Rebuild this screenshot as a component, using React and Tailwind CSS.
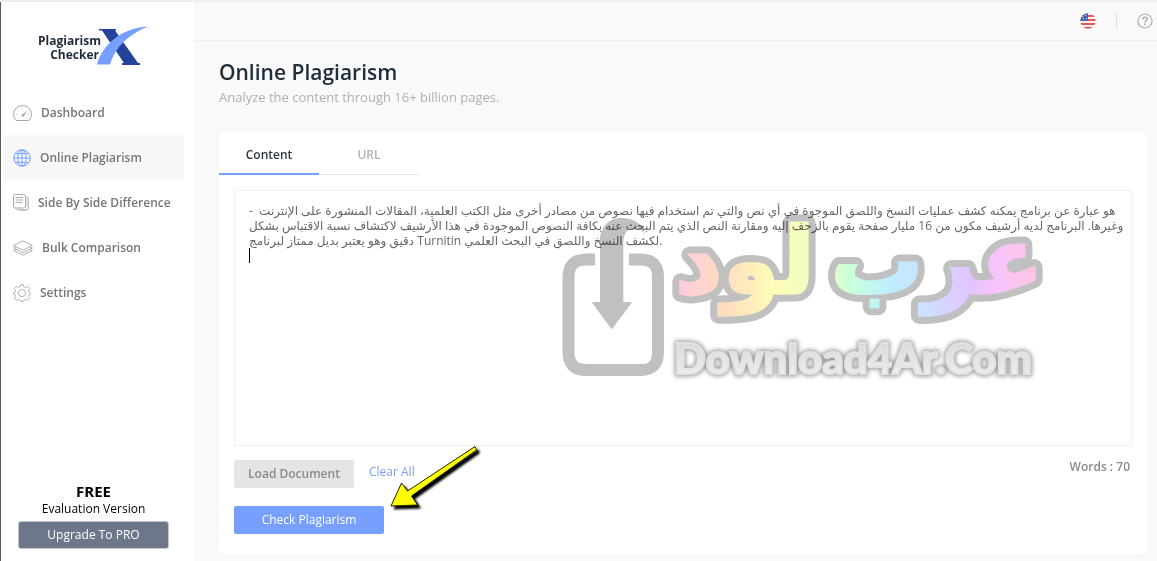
const NAV_ITEMS = [
  { label: "Dashboard", icon: GaugeIcon },
  { label: "Online Plagiarism", icon: GlobeIcon, active: true },
  { label: "Side By Side Difference", icon: PagesIcon },
  { label: "Bulk Comparison", icon: LayersIcon },
  { label: "Settings", icon: GearIcon },
]

const CONTENT = `-  هو عبارة عن برنامج يمكنه كشف عمليات النسخ واللصق الموجوة في أي نص والتي تم استخدام فيها نصوص من مصادر أخرى مثل الكتب العلمية، المقالات المنشورة على الإنترنت
وغيرها. البرنامج لديه أرشيف مكون من 16 مليار صفحة يقوم بالزحف إليه ومقارنة النص الذي يتم البحث عنه بكافة النصوص الموجودة في هذا الأرشيف لاكتشاف نسبة الاقتباس بشكل
دقيق وهو يعتبر بديل ممتاز لبرنامج Turnitin لكشف النسخ واللصق في البحث العلمي.
`

function GaugeIcon() {
  return (
    <svg width="19" height="18" viewBox="0 0 19 18" fill="none" stroke="#a9a9a9">
      <path d="M3.2 16.500C1.400 15 .5 12.800.5 10.500a9 9 0 0 1 18 0c0 2.300-.9 4.500-2.700 6z" />
      <path d="M9.500 3.500v1.200M4.500 5.500l.8.8M14.500 5.500l-.8.8M2.800 10.500H4M15 10.500h1.200" strokeWidth=".8" />
      <path d="M13.800 7l-4.600 3.500c-.8.600-.8 1.600-.2 2 .6.500 1.500.3 2-.5z" fill="#a9a9a9" stroke="none" />
    </svg>
  )
}

function GlobeIcon() {
  return (
    <svg width="18" height="18" viewBox="0 0 18 18" fill="none" stroke="#769fff">
      <circle cx="9" cy="9" r="8.200" />
      <ellipse cx="9" cy="9" rx="4.200" ry="8.200" />
      <path d="M9 .8v16.400M.8 9h16.400M2.300 4.600h13.400M2.300 13.400h13.400" />
    </svg>
  )
}

function PagesIcon() {
  return (
    <svg width="16" height="17" viewBox="0 0 16 17" fill="none" stroke="#aaaaaa">
      <rect x=".5" y=".5" width="12" height="13.500" rx="2" />
      <path d="M12.500 2c1.200 0 1.700.7 1.700 1.700v9.800c0 1.300-.8 2-2 2H4c-1 0-1.700-.5-1.700-1.500" strokeWidth=".7" />
      <path d="M14.200 3.500c.9.200 1.300.8 1.300 1.700v8.800c0 1.600-1 2.500-2.500 2.500H6" strokeWidth=".7" />
      <path d="M2.500 3.500H10M2.500 6H10M2.500 8.500H9" />
    </svg>
  )
}

function LayersIcon() {
  return (
    <svg width="20" height="16" viewBox="0 0 20 16" fill="none" stroke="#a6a6a6" strokeWidth=".9" strokeLinejoin="round">
      <path d="M10 .8l9.300 4.700L10 10.200.7 5.500z" />
      <path d="M3 6.800L.7 8l9.300 4.700L19.300 8 17 6.800" />
      <path d="M3 9.300l-2.300 1.200 9.300 4.700 9.300-4.700L17 9.300" />
    </svg>
  )
}

function GearIcon() {
  return (
    <svg width="18" height="18" viewBox="0 0 18 18" fill="none" stroke="#b3b3b3" strokeLinejoin="round">
      <path d="M7.600.7h2.800l.5 2.200 1.600.7 2-1.300 2.200 2.200-1.300 2 .7 1.600 1.200.2v2l-1.200.5-.7 1.600 1.300 2-2.200 2.200-2-1.300-1.600.7-.5 1.300H7.600l-.5-1.300-1.600-.7-2 1.300-2.200-2.200 1.300-2-.7-1.600-1.200-.5v-2l1.200-.2.7-1.600-1.300-2 2.200-2.200 2 1.300 1.600-.7z" />
      <circle cx="9" cy="9" r="3.600" />
    </svg>
  )
}

function FlagIcon() {
  return (
    <svg width="16" height="16" viewBox="0 0 16 16">
      <clipPath id="flag-clip">
        <circle cx="8" cy="8" r="7.700" />
      </clipPath>
      <g clipPath="url(#flag-clip)">
        <path d="M0 0h16v16H0z" fill="#f7f1f0" />
        <path d="M0 2h16v2H0zM0 6h16v2H0zM0 10h16v2H0zM0 14h16v2H0z" fill="#e8535d" />
        <path d="M0 0h8v8H0z" fill="#4664b4" />
        <path d="M2 3h1v1H2zM5 2h1v1H5zM3 5h1v1H3zM6 5h1v1H6z" fill="#dfe6f6" />
      </g>
    </svg>
  )
}

function HelpIcon() {
  return (
    <svg width="16" height="16" viewBox="0 0 16 16" fill="none" stroke="#b0b0b0" strokeWidth="1.200">
      <circle cx="8" cy="8" r="7" />
      <path d="M5.900 6.300C5.900 5 6.800 4.300 8 4.300s2.200.7 2.200 1.900C10.200 7.600 8 7.800 8 9.400" strokeWidth="1.600" />
      <path d="M8 10.600v1.600" strokeWidth="1.600" />
    </svg>
  )
}

function Logo() {
  return (
    <div className="flex h-[88px] items-start justify-center pt-6 pr-2">
      <div className="pt-2 text-right text-[12px] leading-[14px] font-bold text-[#1d2b3a]">
        <div>Plagiarism</div>
        <div className="pr-[2px]">Checker</div>
      </div>
      <svg width="52" height="40" viewBox="0 0 52 40" className="-ml-1">
        <path d="M2 3h17v1.500h-1L41 37h2v2H25v-2h2L5 4.500H2z" fill="#25429b" />
        <path d="M0 38.500C5 20 23 2 51 .5 32 8 18 21 13 38.500z" fill="#769fff" />
      </svg>
    </div>
  )
}

function Sidebar() {
  return (
    <aside className="flex w-[194px] shrink-0 flex-col border-l border-[#5c5c5c] bg-white">
      <Logo />
      <nav className="flex flex-col pr-[10px] pl-[2px]">
        {NAV_ITEMS.map(({ label, icon: Icon, active }) => (
          <a
            key={label}
            href="#"
            className={`flex h-[45px] items-center gap-[9px] pl-[10px] text-[12px] font-semibold text-[#767676] ${active ? "bg-[#f8f8f8]" : ""}`}
          >
            <Icon />
            {label}
          </a>
        ))}
      </nav>
      <div className="mt-auto flex flex-col pr-[25px] pb-3 pl-[17px] text-center text-black">
        <div className="text-[15px] leading-[18px] font-bold">FREE</div>
        <div className="text-[12px] leading-[18px]">Evaluation Version</div>
        <button className="mt-[3px] h-7 rounded-[3px] border border-[#c3c7cf] bg-[#6e778a] text-[12px] text-white">
          Upgrade To PRO
        </button>
      </div>
    </aside>
  )
}

function Watermark() {
  return (
    <svg
      width="490"
      height="196"
      viewBox="560 190 490 196"
      className="pointer-events-none absolute top-0 left-[326px] mix-blend-multiply"
    >
      <defs>
        <linearGradient id="rainbow" gradientUnits="userSpaceOnUse" x1="670" y1="0" x2="1035" y2="0">
          <stop offset="0" stopColor="#ffc8e0" />
          <stop offset=".15" stopColor="#ffdcc0" />
          <stop offset=".28" stopColor="#fffbb8" />
          <stop offset=".42" stopColor="#eaffc4" />
          <stop offset=".5" stopColor="#c8ffdc" />
          <stop offset=".6" stopColor="#bdeeff" />
          <stop offset=".7" stopColor="#cde0ff" />
          <stop offset=".82" stopColor="#e2c4ff" />
          <stop offset=".9" stopColor="#f8c4fa" />
          <stop offset="1" stopColor="#ffc4e4" />
        </linearGradient>
        <linearGradient id="silver" x1="0" y1="0" x2="0" y2="1">
          <stop offset="0" stopColor="#d2d2d2" />
          <stop offset="1" stopColor="#f4f4f4" />
        </linearGradient>
        <filter id="glow" x="-5%" y="-30%" width="110%" height="160%">
          <feGaussianBlur stdDeviation="2" />
        </filter>
        <g id="brand-ar" fontFamily="'DejaVu Sans', sans-serif" fontSize="92" fontWeight="700" textAnchor="middle">
          <text x="745" y="293">لود</text>
          <text x="937" y="293">عرب</text>
        </g>
        <text id="brand-en" x="853" y="374" fontFamily="Lato, sans-serif" fontSize="42" fontWeight="900" textAnchor="middle">
          Download4Ar.Com
        </text>
      </defs>
      <path
        d="M595 259.500h-9q-17.500 0-17.500 17.500v75q0 18 17.500 18h55q17 0 17-18v-75q0-17.500-17-17.500h-12"
        fill="none"
        stroke="#c0c0c0"
        strokeWidth="12"
      />
      <path
        d="M600 302V240c0-13 9-22 21-22 13 0 22 6 24 16-5-6-13-7-18-3-3 3-3.700 8-3.700 14v57h9l-20.600 27.500L591.500 302z"
        fill="#c0c0c0"
      />
      <use href="#brand-ar" fill="none" stroke="#c0c0c0" strokeWidth="17" strokeLinejoin="round" />
      <use href="#brand-ar" fill="url(#rainbow)" stroke="url(#rainbow)" strokeWidth="3" />
      <use href="#brand-en" fill="#a0a0a0" stroke="#a0a0a0" strokeWidth="5" filter="url(#glow)" />
      <use href="#brand-en" fill="url(#silver)" stroke="#e2e2e2" strokeWidth="2" />
    </svg>
  )
}

function PointerArrow() {
  return (
    <svg
      width="94"
      height="70"
      viewBox="388 444 94 70"
      className="pointer-events-none absolute -top-4 left-[154px]"
    >
      <defs>
        <filter id="arrow-shadow" x="-10%" y="-10%" width="120%" height="120%">
          <feGaussianBlur stdDeviation=".8" />
        </filter>
      </defs>
      <path
        d="M391 506l10.500-23 6 8L475 446.500l1.500 3.500L411.500 496l6 9z"
        transform="translate(3 3)"
        fill="#000"
        stroke="#000"
        filter="url(#arrow-shadow)"
      />
      <path d="M391 506l10.500-23 6 8L475 446.500l1.500 3.500L411.500 496l6 9z" fill="#ffff00" stroke="#222200" />
    </svg>
  )
}

function ContentPanel() {
  return (
    <section className="flex flex-1 flex-col rounded-[5px] bg-white">
      <div className="flex pt-[2px] text-[12px] font-semibold" role="tablist">
        <button role="tab" aria-selected="true" className="h-[41px] w-[100px] border-b-2 border-[#769fff] pt-[2px] text-[#2b3742]">
          Content
        </button>
        <button role="tab" aria-selected="false" className="h-[41px] w-[100px] border-b border-[#e6e6e6] pt-[2px] text-[#b3b3b3]">
          URL
        </button>
      </div>
      <div className="flex flex-1 flex-col px-[15px] pt-[15px] pb-5">
        <div className="relative flex flex-1">
          <textarea
            aria-label="Content"
            dir="ltr"
            wrap="off"
            spellCheck={false}
            defaultValue={CONTENT}
            className="w-full resize-none overflow-hidden border border-[#f1f1f1] px-[14px] py-3 font-['Open_Sans','DejaVu_Sans',sans-serif] text-[12px] leading-[15px] text-[#666666] outline-none"
          />
          <span className="absolute top-[58px] left-[15px] h-[15px] w-px bg-black" />
          <Watermark />
        </div>
        <div className="relative mt-[14px] flex items-start text-[12px]">
          <button className="h-7 w-[120px] rounded-[2px] bg-[#e5e5e5] font-semibold text-[#8a8a8a]">Load Document</button>
          <button className="ml-[15px] h-6 text-[#769fff]">Clear All</button>
          <span className="ml-auto pr-[2px] leading-[14px] font-semibold text-[#8a8a8a]">Words : 70</span>
          <PointerArrow />
        </div>
        <button className="mt-[18px] h-7 w-[150px] rounded-[2px] bg-[#769fff] text-[12px] text-white">
          Check Plagiarism
        </button>
      </div>
    </section>
  )
}

export default function App() {
  return (
    <div className="flex min-h-screen border-t-2 border-[#efefef] bg-[#f9f9f9] font-['Open_Sans','DejaVu_Sans',sans-serif]">
      <Sidebar />
      <main className="flex min-w-0 flex-1 flex-col">
        <header className="flex h-[39px] items-center justify-end border-b border-[#eeeeee] pr-1">
          <button aria-label="Language">
            <FlagIcon />
          </button>
          <span className="mr-5 ml-5 h-[15px] w-px bg-[#dddddd]" />
          <button aria-label="Help">
            <HelpIcon />
          </button>
        </header>
        <div className="flex flex-1 flex-col pt-[17px] pr-[10px] pb-[7px] pl-[25px]">
          <h1 className="text-[21px] leading-7 font-semibold text-[#1f2d3a]">Online Plagiarism</h1>
          <p className="mb-6 text-[13px] leading-[22px] text-[#b0b0b0]">Analyze the content through 16+ billion pages.</p>
          <ContentPanel />
        </div>
      </main>
    </div>
  )
}
